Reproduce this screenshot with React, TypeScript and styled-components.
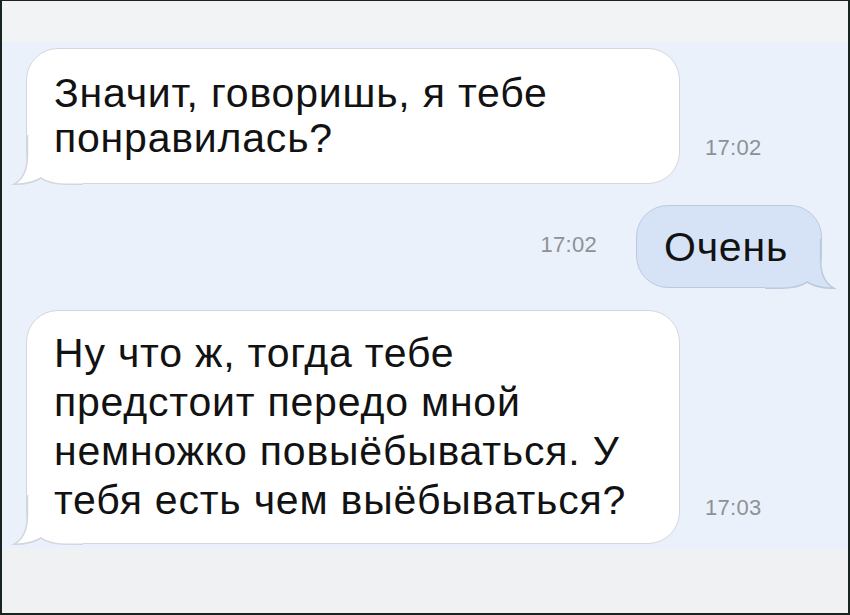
import React from "react";
import styled, { createGlobalStyle } from "styled-components";

const Global = createGlobalStyle`
  html, body { margin: 0; padding: 0; background: #eaf0f9; }
  #root { width: 850px; height: 615px; }
`;

const Frame = styled.div`
  box-sizing: border-box;
  width: 850px;
  height: 615px;
  border: 2px solid #17241f;
  border-top-width: 1px;
  display: flex;
  flex-direction: column;
  background: #eaf0f9;
  font-family: "Liberation Sans", Arial, sans-serif;
  overflow: hidden;
`;

const TopBand = styled.div`
  height: 41px;
  background: #f2f3f5;
  flex: none;
`;

const Chat = styled.div`
  flex: 1;
  display: flex;
  flex-direction: column;
  padding: 6px 26px 0 24px;
  background: #eaf1fa;
`;

const BottomBand = styled.div`
  height: 64px;
  background: #f0f1f2;
  flex: none;
`;

const Row = styled.div<{ $out?: boolean; $mt?: number }>`
  display: flex;
  justify-content: ${(p) => (p.$out ? "flex-end" : "flex-start")};
  align-items: ${(p) => (p.$out ? "center" : "flex-end")};
  margin-top: ${(p) => p.$mt ?? 0}px;
`;

const Bubble = styled.div<{ $out?: boolean; $w: number; $h: number }>`
  position: relative;
  box-sizing: border-box;
  width: ${(p) => p.$w}px;
  height: ${(p) => p.$h}px;
  background: ${(p) => (p.$out ? "#d6e3f6" : "#ffffff")};
  border: 1.5px solid ${(p) => (p.$out ? "#bccadd" : "#d3d7dd")};
  border-radius: 32px;
  padding: ${(p) => (p.$out ? "0 0 0 27px" : "0 10px 0 27px")};
  display: flex;
  align-items: center;
  order: ${(p) => (p.$out ? 2 : 1)};
`;

const Text = styled.div<{ $lh?: number }>`
  position: relative;
  font-size: 41px;
  line-height: ${(p) => p.$lh ?? 46}px;
  color: #121212;
  letter-spacing: 0.8px;
  white-space: nowrap;
`;

const Time = styled.div<{ $out?: boolean }>`
  font-size: 22px;
  color: #8d9197;
  letter-spacing: 0.3px;
  order: ${(p) => (p.$out ? 1 : 2)};
  margin: ${(p) => (p.$out ? "0 39px 4px 0" : "0 0 23px 25px")};
`;

const TailSvg = styled.svg<{ $out?: boolean }>`
  position: absolute;
  bottom: -1.5px;
  ${(p) => (p.$out ? "right: -14px; transform: scaleX(-1);" : "left: -14px;")}
  width: 70px;
  height: 50px;
  overflow: visible;
`;

function Tail({ out }: { out?: boolean }) {
  const fill = out ? "#d6e3f6" : "#ffffff";
  const stroke = out ? "#bccadd" : "#d3d7dd";
  const edge =
    "M 14.5 0 L 14.5 20 C 14.5 36 9 45 1 49.2 C 11 49.5 21 47 28 43 C 34 47 43 49.2 54 49.2 L 70 49.2";
  return (
    <TailSvg $out={out} viewBox="0 0 70 50">
      <path d={edge + " L 70 0 Z"} fill={fill} stroke="none" />
      <path d={edge} fill="none" stroke={stroke} strokeWidth={1.5} />
    </TailSvg>
  );
}

export default function App() {
  return (
    <>
      <Global />
      <Frame>
        <TopBand />
        <Chat>
          <Row>
            <Bubble $w={654} $h={136}>
              <Tail />
              <Text $lh={45}>
                Значит, говоришь, я тебе
                <br />
                понравилась?
              </Text>
            </Bubble>
            <Time>17:02</Time>
          </Row>
          <Row $out $mt={21}>
            <Bubble $out $w={186} $h={83}>
              <Tail out />
              <Text>Очень</Text>
            </Bubble>
            <Time $out>17:02</Time>
          </Row>
          <Row $mt={22}>
            <Bubble $w={654} $h={234}>
              <Tail />
              <Text $lh={49}>
                Ну что ж, тогда тебе
                <br />
                предстоит передо мной
                <br />
                немножко повыёбываться. У
                <br />
                тебя есть чем выёбываться?
              </Text>
            </Bubble>
            <Time>17:03</Time>
          </Row>
        </Chat>
        <BottomBand />
      </Frame>
    </>
  );
}
